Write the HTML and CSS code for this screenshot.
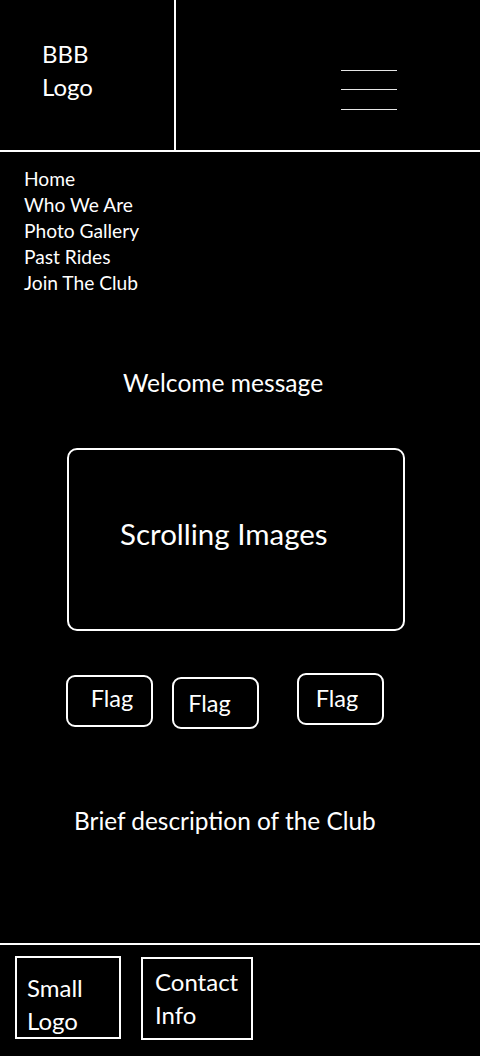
FILE: index.html
```html
<!DOCTYPE html>
<html lang="en">
<head>
<meta charset="utf-8">
<title>BBB Wireframe</title>
<link rel="stylesheet" href="styles.css">
</head>
<body>
<div class="page">
  <header class="header">
    <div class="logo-cell">
      <div class="logo-text">BBB<br>Logo</div>
    </div>
    <div class="menu-cell">
      <svg class="hamburger" width="56" height="41" viewBox="0 0 56 41" aria-hidden="true">
        <line x1="0" y1="0.5" x2="56" y2="0.5"/>
        <line x1="0" y1="19.5" x2="56" y2="19.5"/>
        <line x1="0" y1="39.5" x2="56" y2="39.5"/>
      </svg>
    </div>
  </header>

  <nav class="nav">
    <a class="nav-link">Home</a>
    <a class="nav-link">Who We Are</a>
    <a class="nav-link">Photo Gallery</a>
    <a class="nav-link">Past Rides</a>
    <a class="nav-link">Join The Club</a>
  </nav>

  <main class="main">
    <p class="welcome">Welcome message</p>
    <div class="scroller"><span class="scroller-text">Scrolling Images</span></div>
    <div class="flags">
      <div class="flag flag-1"><span class="flag-text">Flag</span></div>
      <div class="flag flag-2"><span class="flag-text">Flag</span></div>
      <div class="flag flag-3"><span class="flag-text">Flag</span></div>
    </div>
    <p class="description">Brief description of the Club</p>
  </main>

  <footer class="footer">
    <div class="foot-box foot-logo">Small<br>Logo</div>
    <div class="foot-box foot-contact">Contact<br>Info</div>
  </footer>
</div>
</body>
</html>
```

FILE: styles.css
```css
* { box-sizing: border-box; }

html, body {
  margin: 0;
  padding: 0;
  background: #000;
}

body {
  color: #fff;
  font-family: Lato, "Open Sans", "Liberation Sans", sans-serif;
}

.page {
  width: 480px;
  height: 1056px;
  display: flex;
  flex-direction: column;
  overflow: hidden;
}

/* Header */
.header {
  display: flex;
  height: 152px;
  border-bottom: 2px solid #fff;
  flex-shrink: 0;
}

.logo-cell {
  width: 176px;
  border-right: 2px solid #fff;
  padding: 37px 0 0 42px;
}

.logo-text {
  font-size: 24px;
  line-height: 33px;
}

.menu-cell {
  flex: 1;
  padding: 70px 0 0 165px;
}

.hamburger {
  display: block;
  stroke: #e6e6e6;
  stroke-width: 1;
}

/* Nav */
.nav {
  display: flex;
  flex-direction: column;
  padding: 14px 0 0 24px;
}

.nav-link {
  font-size: 19.2px;
  line-height: 26px;
  color: #fff;
}

/* Main */
.main {
  flex: 1;
  display: flex;
  flex-direction: column;
}

.welcome {
  margin: 72px 0 0 0;
  padding-left: 123px;
  font-size: 24.6px;
  line-height: 30px;
}

.scroller {
  margin: 50px 0 0 67px;
  width: 338px;
  height: 183px;
  border: 2px solid #fff;
  border-radius: 10px;
  display: flex;
  align-items: center;
  padding: 0 0 12px 51px;
}

.scroller-text {
  font-size: 29.5px;
  line-height: 34px;
}

.flags {
  display: flex;
  align-items: flex-start;
  margin-top: 42px;
  padding-left: 66px;
}

.flag {
  width: 87px;
  height: 52px;
  border: 2px solid #fff;
  border-radius: 9px;
  display: flex;
  align-items: center;
  justify-content: center;
  font-size: 23.5px;
  line-height: 28px;
}

.flag-1 { margin-top: 2px; padding: 0 0 7px 5px; }
.flag-2 { margin-top: 4px; margin-left: 19px; padding: 0 12px 1px 0; }
.flag-3 { margin-top: 0; margin-left: 38px; padding: 0 7px 2px 0; }

.description {
  margin: 77px 0 0 0;
  padding-left: 74px;
  font-size: 24.4px;
  line-height: 30px;
}

/* Footer */
.footer {
  height: 113px;
  flex-shrink: 0;
  border-top: 2px solid #fff;
  display: flex;
  align-items: flex-start;
  padding: 11px 0 0 15px;
  gap: 20px;
}

.foot-box {
  border: 2px solid #fff;
  font-size: 24px;
  line-height: 33px;
}

.foot-logo {
  width: 106px;
  height: 83px;
  padding: 13px 0 0 10px;
}

.foot-contact {
  width: 112px;
  height: 83px;
  margin-top: 1px;
  padding: 6px 0 0 12px;
}
```
